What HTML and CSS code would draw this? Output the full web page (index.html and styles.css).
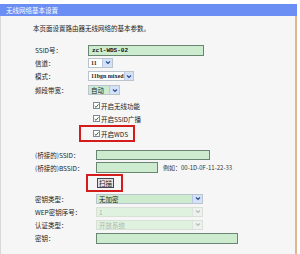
FILE: index.html
```html
<!DOCTYPE html>
<html lang="zh-CN">
<head>
    <meta charset="UTF-8">
    <title>无线网络基本设置</title>
    <link rel="stylesheet" href="styles.css">
</head>
<body>
    <div class="panel">
        <div class="panel_title">无线网络基本设置</div>
        <div class="panel_body">
            <p class="intro">本页面设置路由器无线网络的基本参数。</p>

            <div class="form form_top">
                <div class="row r_ssid">
                    <span class="label">SSID号：</span>
                    <span class="input ssid_in">zcl-WDS-02</span>
                </div>
                <div class="row r_chan">
                    <span class="label">信道：</span>
                    <span class="select plain w_chan"><span class="val">11</span><span class="arrow"><svg width="6" height="5" viewBox="0 0 6 5"><path d="M1 1.5 L3 3.5 L5 1.5" fill="none" stroke="#2a4f9a" stroke-width="1.2"/></svg></span></span>
                </div>
                <div class="row r_mode">
                    <span class="label">模式：</span>
                    <span class="select plain w_mode"><span class="val">11bgn mixed</span><span class="arrow"><svg width="6" height="5" viewBox="0 0 6 5"><path d="M1 1.5 L3 3.5 L5 1.5" fill="none" stroke="#2a4f9a" stroke-width="1.2"/></svg></span></span>
                </div>
                <div class="row r_band">
                    <span class="label">频段带宽：</span>
                    <span class="select green w_band"><span class="val">自动</span><span class="arrow"><svg width="6" height="5" viewBox="0 0 6 5"><path d="M1 1.5 L3 3.5 L5 1.5" fill="none" stroke="#2a4f9a" stroke-width="1.2"/></svg></span></span>
                </div>
                <div class="row r_check first_check">
                    <span class="label"></span>
                    <span class="check_item"><span class="box"><svg width="6" height="6" viewBox="0 0 6 6"><path d="M0.8 3 L2.4 4.6 L5.3 1" fill="none" stroke="#2d5a2d" stroke-width="1.1"/></svg></span>开启无线功能</span>
                </div>
                <div class="row r_check">
                    <span class="label"></span>
                    <span class="check_item"><span class="box"><svg width="6" height="6" viewBox="0 0 6 6"><path d="M0.8 3 L2.4 4.6 L5.3 1" fill="none" stroke="#2d5a2d" stroke-width="1.1"/></svg></span>开启SSID广播</span>
                </div>
                <div class="row r_wds">
                    <span class="label"></span>
                    <span class="mark mark_wds"><span class="check_item"><span class="box"><svg width="6" height="6" viewBox="0 0 6 6"><path d="M0.8 3 L2.4 4.6 L5.3 1" fill="none" stroke="#2d5a2d" stroke-width="1.1"/></svg></span>开启WDS</span></span>
                </div>
            </div>

            <div class="form form_bottom">
                <div class="row r_bssid_name">
                    <span class="label">(桥接的)SSID：</span>
                    <span class="input bridge_in"></span>
                </div>
                <div class="row r_bssid">
                    <span class="label">(桥接的)BSSID：</span>
                    <span class="input bssid_in"></span>
                    <span class="hint">例如：00-1D-0F-11-22-33</span>
                </div>
                <div class="row r_scan">
                    <span class="label"></span>
                    <span class="mark mark_scan"><span class="btn">扫描</span></span>
                </div>
                <div class="row r_key">
                    <span class="label">密钥类型：</span>
                    <span class="select green w_key"><span class="val">无加密</span><span class="arrow"><svg width="6" height="5" viewBox="0 0 6 5"><path d="M1 1.5 L3 3.5 L5 1.5" fill="none" stroke="#2a4f9a" stroke-width="1.2"/></svg></span></span>
                </div>
                <div class="row r_key">
                    <span class="label">WEP密钥序号：</span>
                    <span class="select disabled w_key"><span class="val">1</span><span class="arrow"><svg width="6" height="5" viewBox="0 0 6 5"><path d="M1 1.5 L3 3.5 L5 1.5" fill="none" stroke="#b8c0b8" stroke-width="1.2"/></svg></span></span>
                </div>
                <div class="row r_key">
                    <span class="label">认证类型：</span>
                    <span class="select disabled w_key"><span class="val">开放系统</span><span class="arrow"><svg width="6" height="5" viewBox="0 0 6 5"><path d="M1 1.5 L3 3.5 L5 1.5" fill="none" stroke="#b8c0b8" stroke-width="1.2"/></svg></span></span>
                </div>
                <div class="row r_pass">
                    <span class="label">密钥：</span>
                    <span class="input pass_in"></span>
                </div>
            </div>
        </div>
    </div>
</body>
</html>
```

FILE: styles.css
```css
html, body {
    margin: 0;
    padding: 0;
    background: #fff;
}

body {
    padding-top: 4px;
    font-family: "Noto Sans CJK SC", "Noto Sans", sans-serif;
    font-size: 6.5px;
    color: #222;
}

.panel {
    width: 297px;
    height: 250px;
    display: flex;
    flex-direction: column;
}

.panel_title {
    height: 12px;
    line-height: 12px;
    background: #6a8ef4;
    color: #fff;
    padding-left: 6px;
    font-size: 6.5px;
}

.panel_body {
    flex: 1;
    background: #f6f6f6;
    border-left: 1px solid #d8d8d8;
    border-right: 2px solid #e2b58c;
}

.intro {
    margin: 7px 0 0 32px;
    line-height: 10px;
    height: 10px;
}

.form {
    display: flex;
    flex-direction: column;
}

.form_top {
    margin-top: 11px;
}

.form_bottom {
    margin-top: 7px;
}

.row {
    display: flex;
    align-items: center;
    height: 13px;
}

.label {
    flex: none;
    box-sizing: border-box;
    padding-left: 34px;
    white-space: nowrap;
}

.form_top .label {
    width: 87px;
}

.form_bottom .label {
    width: 95px;
}

.r_ssid { height: 12px; }
.r_mode { height: 14px; }
.r_band { height: 14px; }
.first_check { margin-top: 2px; }
.r_wds { height: 17px; }
.r_bssid_name { height: 12px; }
.r_scan { height: 18px; }
.r_pass { height: 14px; }

.input {
    box-sizing: border-box;
    height: 11px;
    background: #cdeccf;
    border: 1px solid #6a8672;
    font-family: "Liberation Mono", monospace;
    font-size: 6px;
    line-height: 9px;
    padding-left: 3px;
    color: #111;
}

.ssid_in {
    width: 116px;
    font-weight: bold;
}

.bridge_in {
    width: 114px;
    height: 10px;
}

.bssid_in {
    width: 62px;
    height: 11px;
}

.pass_in {
    width: 142px;
}

.hint {
    margin-left: 5px;
    font-size: 6px;
    color: #333;
}

.select {
    box-sizing: border-box;
    height: 10px;
    display: flex;
    align-items: stretch;
    border: 1px solid #b9c4cc;
}

.select .val {
    flex: 1;
    line-height: 8px;
    padding-left: 2px;
    white-space: nowrap;
}

.select.plain {
    background: #fff;
    font-family: "Liberation Serif", serif;
    font-weight: bold;
    font-size: 6px;
}

.select.green {
    background: #cdeccf;
}

.select.disabled {
    background: #def2df;
    color: #b0b8b0;
    border-color: #d8e0d8;
}

.select .arrow {
    width: 9px;
    display: flex;
    align-items: center;
    justify-content: center;
    background: #d5e2f6;
    border-left: 1px solid #b7c8e6;
}

.select.disabled .arrow {
    background: #eef2ee;
    border-left-color: #dde3dd;
}

.w_chan { width: 25px; }
.w_mode { width: 46px; }
.w_band { width: 32px; }
.w_key { width: 107px; }

.check_item {
    display: flex;
    align-items: center;
    margin-left: 5px;
    white-space: nowrap;
}

.box {
    box-sizing: border-box;
    width: 7px;
    height: 7px;
    margin-right: 1px;
    border: 1px solid #7a8a9a;
    background: #fff;
    display: flex;
    align-items: center;
    justify-content: center;
}

.mark {
    box-sizing: border-box;
    display: flex;
    align-items: center;
    border: 2px solid #d31c1c;
}

.mark_wds {
    margin-left: -9px;
    width: 56px;
    height: 17px;
    padding-left: 7px;
}

.mark_scan {
    margin-left: -10px;
    width: 37px;
    height: 18px;
    padding-left: 9px;
}

.btn {
    box-sizing: border-box;
    height: 10px;
    width: 17px;
    line-height: 8px;
    text-align: center;
    border: 1px solid #445;
    background: #e4e4e8;
    font-size: 6.5px;
}
```
